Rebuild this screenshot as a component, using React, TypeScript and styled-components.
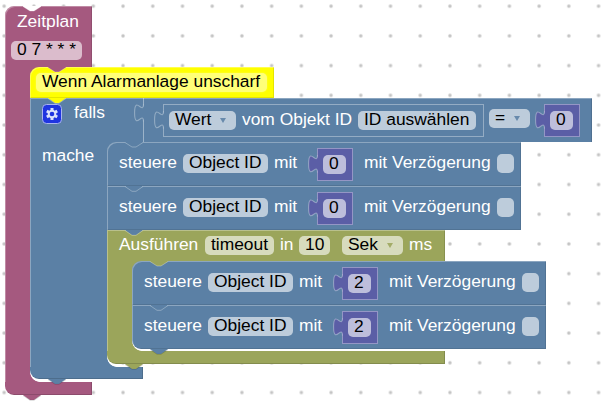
import React from 'react';
import styled, { createGlobalStyle } from 'styled-components';

const GlobalStyle = createGlobalStyle`
  body {
    margin: 0;
    overflow: hidden;
    font-family: "Liberation Sans", Arial, sans-serif;
  }
`;

const PINK = '#a5597f';
const BLUE = '#5b80a5';
const YELLOW = '#ffff00';
const OLIVE = '#9ba55b';
const VIOLET = '#5b5ea6';

const Workspace = styled.main`
  width: 601px;
  height: 401px;
  box-sizing: border-box;
  padding: 6px 0 0 5px;
  overflow: hidden;
  isolation: isolate;
  background-color: #fff;
  background-image: radial-gradient(circle, #c4c4c4 1px, transparent 2.3px);
  background-size: 29.73px 29.73px;
  background-position: -10.7px -8.7px;
`;

const Block = styled.div<{ $color: string }>`
  --color: ${p => p.$color};
  position: relative;
  width: max-content;
`;

const Row = styled.div<{ $width: number; $height: number; $first?: boolean; $last?: boolean }>`
  display: flex;
  align-items: flex-start;
  box-sizing: border-box;
  width: ${p => p.$width}px;
  height: ${p => p.$height}px;
  padding-left: 12px;
  background: var(--color);
  border-radius: ${p => (p.$first ? '9px' : '0')} 0 0 ${p => (p.$last ? '9px' : '0')};
  box-shadow: inset 1px 1px 0 rgba(255, 255, 255, 0.3), inset -1px -1px 0 rgba(0, 0, 0, 0.1);
`;

const Header = styled.div<{ $width: number; $height: number; $first?: boolean }>`
  display: flex;
  align-items: flex-start;
  box-sizing: border-box;
  width: ${p => p.$width}px;
  height: ${p => p.$height}px;
  padding-left: 12px;
  background: var(--color);
  border-radius: ${p => (p.$first ? '9px' : '0')} 0 0 0;
  box-shadow: inset 1px 1px 0 rgba(255, 255, 255, 0.3), inset -1px 0 0 rgba(0, 0, 0, 0.12);
`;

const ScheduleHeader = styled(Header)`
  flex-direction: column;
  gap: 12px;
  padding: 7px 0 0 6px;
`;

const Body = styled.div`
  display: flex;
`;

const Rail = styled.div<{ $width: number }>`
  flex: none;
  box-sizing: border-box;
  width: ${p => p.$width}px;
  padding: 5px 0 0 12px;
  background: var(--color);
  box-shadow: inset 1px 0 0 rgba(255, 255, 255, 0.3);
`;

// The opening of a C-shaped block; its corners are filled in the block colour
const Mouth = styled.div<{ $gap: number }>`
  position: relative;
  padding-bottom: ${p => p.$gap}px;

  &::before,
  &::after {
    content: '';
    position: absolute;
    z-index: -1;
    left: 0;
    width: 10px;
    height: 10px;
  }

  &::before {
    top: 0;
    background: var(--color);
  }

  &::after {
    bottom: 0;
    background: radial-gradient(circle at 10px 0, #fff 9.5px, var(--color) 10.2px);
  }
`;

const Foot = styled.div<{ $width: number; $height: number }>`
  width: ${p => p.$width}px;
  height: ${p => p.$height}px;
  background: var(--color);
  border-radius: 0 0 0 9px;
  box-shadow: inset -1px -1px 0 rgba(0, 0, 0, 0.15);
`;

const Connector = styled.svg<{ $bottom?: boolean }>`
  position: absolute;
  z-index: 2;
  left: 18px;
  ${p => (p.$bottom ? 'bottom: -6px;' : 'top: 0;')}
  width: 18px;
  height: 6px;
`;

const Text = styled.span<{ $width?: number; $indent?: number }>`
  flex: none;
  box-sizing: border-box;
  width: ${p => (p.$width ? `${p.$width}px` : 'auto')};
  padding-left: ${p => p.$indent ?? 0}px;
  color: #fff;
  font-size: 17.4px;
  line-height: 16px;
  white-space: pre;
`;

const Field = styled.span<{ $width: number }>`
  display: flex;
  flex: none;
  box-sizing: border-box;
  width: ${p => p.$width}px;
  height: 19px;
  padding-left: 6px;
  border-radius: 5px;
  background: rgba(255, 255, 255, 0.6);
  color: #000;
  font-size: 17.4px;
  line-height: 16px;
  white-space: pre;
`;

const CommentField = styled(Field)`
  margin: 6px 0 0 -6px;
  background: #ffff78;
  box-shadow: 0 0 2px #ffff50;
`;

const Caret = styled.i`
  align-self: flex-start;
  margin: 7px 10px 0 auto;
  border: 3.5px solid transparent;
  border-top: 5px solid color-mix(in srgb, var(--color) 92%, #fff);
  border-bottom: 0;
`;

const Line = styled.div<{ $top: number }>`
  display: flex;
  align-items: flex-start;
  padding-top: ${p => p.$top}px;
`;

const Space = styled.span<{ $width: number }>`
  flex: none;
  width: ${p => p.$width}px;
`;

const Value = styled.div<{ $color: string; $width: number }>`
  --color: ${p => p.$color};
  position: relative;
  display: flex;
  flex: none;
  align-items: flex-start;
  box-sizing: border-box;
  width: ${p => p.$width}px;
  height: 33px;
  padding: 6px 0 0 5px;
  background: var(--color);
  border: 1px solid rgba(255, 255, 255, 0.35);
`;

const Comparison = styled.div`
  position: relative;
  display: flex;
  flex: none;
  align-items: flex-start;
  box-sizing: border-box;
  width: 449px;
  height: 44px;
  padding-left: 19px;
  border-left: 1px solid rgba(255, 255, 255, 0.4);
`;

const PlugSvg = styled.svg`
  position: absolute;
  left: -10.5px;
  top: 0;
  width: 10.7px;
  height: 23.8px;
`;

const GearSvg = styled.svg`
  flex: none;
  width: 20px;
  height: 20px;
`;

const Notch = ({ color }: { color: string }) => (
  <Connector viewBox="0 0 18 6">
    <path d="M0 0H18V.500L11 5H7L0 .500Z" fill={color} />
    <path d="M0 .5L7 5H11L18 .5" fill="none" stroke="#fff" strokeOpacity=".3" />
  </Connector>
);

const Tab = ({ end }: { end?: boolean }) => (
  <Connector $bottom viewBox="0 0 18 6">
    <path d="M0 0H18L11 5H7Z" fill="var(--color)" />
    <path
      d="M0 .5L7 5.300H11L18 .5"
      fill="none"
      stroke={end ? '#000' : '#fff'}
      strokeOpacity={end ? 0.15 : 0.3}
    />
  </Connector>
);

const Plug = () => (
  <PlugSvg viewBox="-8 0 9 20">
    <path d="M1 5H0C0 15 -7.500 -3 -7.500 12.500S0 10 0 20H1Z" fill="var(--color)" />
    <path
      d="M0 5C0 15 -7.500 -3 -7.500 12.500S0 10 0 20"
      fill="none"
      stroke="#fff"
      strokeOpacity=".35"
      strokeWidth=".9"
    />
  </PlugSvg>
);

const Gear = () => (
  <GearSvg viewBox="0 0 20 20">
    <rect x=".5" y=".5" width="19" height="19" rx="4" fill="#1f35e0" stroke="#a9b4f0" />
    <g stroke="#dce3fb" strokeWidth="3">
      <path d="M10 4V16M4.800 7L15.200 13M4.800 13L15.200 7" />
    </g>
    <circle cx="10" cy="10" r="4.300" fill="#dce3fb" />
    <circle cx="10" cy="10" r="2.300" fill="#1f35e0" />
  </GearSvg>
);

const NumberValue = ({ value }: { value: string }) => (
  <Value $color={VIOLET} $width={36}>
    <Plug />
    <Field $width={23}>{value}</Field>
  </Value>
);

type ControlProps = { value: string; from?: string; last?: boolean };

const ControlBlock = ({ value, from, last }: ControlProps) => (
  <Block $color={BLUE}>
    <Row $width={414} $height={44} $first={!!from} $last={last}>
      <Line $top={12}>
        <Text $width={64}>steuere</Text>
        <Field $width={85}>Object ID</Field>
        <Space $width={6} />
        <Text $width={43}>mit</Text>
      </Line>
      <Line $top={6}>
        <NumberValue value={value} />
      </Line>
      <Line $top={12}>
        <Space $width={11} />
        <Text $width={133}>mit Verzögerung</Text>
        <Field $width={17} />
      </Line>
    </Row>
    {from && <Notch color={from} />}
    <Tab end={last} />
  </Block>
);

const CommentBlock = () => (
  <Block $color={YELLOW}>
    <Row $width={244} $height={31} $first>
      <CommentField $width={231}>Wenn Alarmanlage unscharf</CommentField>
    </Row>
    <Notch color={PINK} />
    <Tab />
  </Block>
);

const TimeoutBlock = () => (
  <Block $color={OLIVE}>
    <Header $width={338} $height={31}>
      <Line $top={6}>
        <Text $width={86}>Ausführen</Text>
        <Field $width={69}>timeout</Field>
        <Space $width={6} />
        <Text $width={19}>in</Text>
        <Field $width={31}>10</Field>
        <Space $width={12} />
        <Field $width={61}>Sek<Caret /></Field>
        <Space $width={6} />
        <Text>ms</Text>
      </Line>
    </Header>
    <Body>
      <Rail $width={25} />
      <Mouth $gap={2}>
        <ControlBlock value="2" from={OLIVE} />
        <ControlBlock value="2" last />
      </Mouth>
    </Body>
    <Foot $width={338} $height={13} />
    <Tab end />
  </Block>
);

const ConditionBlock = () => (
  <Block $color={BLUE}>
    <Header $width={562} $height={44}>
      <Line $top={6}>
        <Gear />
        <Text $width={81} $indent={12}>falls</Text>
      </Line>
      <Comparison>
        <Plug />
        <Line $top={6}>
          <Value $color={BLUE} $width={321}>
            <Plug />
            <Field $width={67}>Wert<Caret /></Field>
            <Space $width={6} />
            <Text $width={116}>vom Objekt ID</Text>
            <Field $width={118}>ID auswählen</Field>
          </Value>
          <Space $width={5} />
        </Line>
        <Line $top={11}>
          <Field $width={41}>=<Caret /></Field>
          <Space $width={14} />
        </Line>
        <Line $top={6}>
          <NumberValue value="0" />
        </Line>
      </Comparison>
    </Header>
    <Body>
      <Rail $width={77}>
        <Text>mache</Text>
      </Rail>
      <Mouth $gap={3}>
        <ControlBlock value="0" from={BLUE} />
        <ControlBlock value="0" />
        <TimeoutBlock />
      </Mouth>
    </Body>
    <Foot $width={113} $height={12} />
    <Tab end />
  </Block>
);

const App: React.FC = () => (
  <>
    <GlobalStyle />
    <Workspace>
      <Block $color={PINK}>
        <ScheduleHeader $width={87} $height={61} $first>
          <Text $indent={6}>Zeitplan</Text>
          <Field $width={71}>0 7 * * *</Field>
        </ScheduleHeader>
        <Notch color="#fff" />
        <Body>
          <Rail $width={25} />
          <Mouth $gap={3}>
            <CommentBlock />
            <ConditionBlock />
          </Mouth>
        </Body>
        <Foot $width={87} $height={13} />
        <Tab end />
      </Block>
    </Workspace>
  </>
);

export default App;
